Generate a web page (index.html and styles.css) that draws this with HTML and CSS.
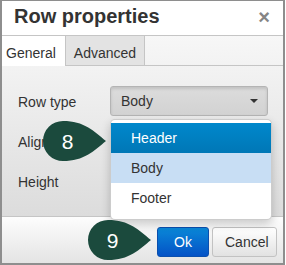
FILE: index.html
```html
<!DOCTYPE html>
<html>
<head>
<meta charset="utf-8">
<link rel="stylesheet" href="styles.css">
</head>
<body>
<div class="dialog">
  <div class="head">
    <span class="title">Row properties</span>
    <span class="close">×</span>
  </div>
  <div class="panel">
    <div class="tabs">
      <div class="tab active">General</div>
      <div class="tab">Advanced</div>
    </div>
    <div class="form">
      <div class="row">
        <span class="label">Row type</span>
        <div class="listbox pressed"><span>Body</span><i class="caret"></i></div>
      </div>
      <div class="row">
        <span class="label">Align</span>
        <div class="listbox"><i class="caret"></i></div>
      </div>
      <div class="row">
        <span class="label">Height</span>
        <div class="textbox"></div>
      </div>
    </div>
  </div>
  <div class="foot">
    <button class="btn primary">Ok</button>
    <button class="btn">Cancel</button>
  </div>

  <div class="menu">
    <div class="item selected">Header</div>
    <div class="item hover">Body</div>
    <div class="item">Footer</div>
  </div>

  <div class="marker m8">
    <svg width="66" height="42" viewBox="0 0 66 42"><path d="M64 21 C52 11 42 1 21 1 A20 20 0 0 0 21 41 C42 41 52 31 64 21 Z"/></svg>
    <span class="num">8</span>
  </div>
  <div class="marker m9">
    <svg width="66" height="42" viewBox="0 0 66 42"><path d="M64 21 C52 11 42 1 21 1 A20 20 0 0 0 21 41 C42 41 52 31 64 21 Z"/></svg>
    <span class="num">9</span>
  </div>
</div>
</body>
</html>
```

FILE: styles.css
```css
html, body {
  margin: 0;
  padding: 0;
  background: #fff;
}

body {
  font-family: "Liberation Sans", Arial, sans-serif;
  font-size: 14px;
  color: #333;
}

.dialog {
  position: relative;
  box-sizing: border-box;
  width: 285px;
  height: 265px;
  border: 2px solid #8e8e8e;
  border-top-width: 1px;
  background: #fff;
  overflow: hidden;
}

.head {
  position: relative;
  padding: 5px 12px 9px;
  border-bottom: 1px solid #c5c5c5;
  background: #fff;
}

.title {
  display: block;
  font-size: 20px;
  line-height: 20px;
  font-weight: bold;
  color: #333;
}

.close {
  position: absolute;
  right: 13px;
  top: 5px;
  font-size: 20px;
  line-height: 22px;
  font-weight: bold;
  color: #858585;
}

.panel {
  background: linear-gradient(#f7f7f7, #dcdcdc);
}

.tabs {
  display: flex;
  height: 29px;
  border-bottom: 1px solid #c5c5c5;
}

.tab {
  padding: 7px 8px 2px 8px;
  line-height: 20px;
  background: #e3e3e3;
  border-right: 1px solid #c5c5c5;
  color: #333;
}

.tab.active {
  padding-left: 4px;
  padding-right: 9px;
  background: #fff;
  margin-bottom: -1px;
}

.form {
  display: flex;
  flex-direction: column;
  gap: 10px;
  padding: 20px 15px 20px 16px;
}

.row {
  display: grid;
  grid-template-columns: 92px 158px;
  height: 30px;
}

.label {
  line-height: 30px;
  padding-top: 1px;
}

.listbox {
  position: relative;
  box-sizing: border-box;
  height: 30px;
  padding-left: 10px;
  line-height: 28px;
  border: 1px solid #b4b4b4;
  border-radius: 3px;
  background: linear-gradient(#f6f6f6, #dadada);
}

.listbox.pressed {
  background: linear-gradient(#dcdcdc, #d2d2d2);
  box-shadow: inset 0 2px 3px rgba(0, 0, 0, 0.12);
}

.caret {
  position: absolute;
  right: 9px;
  top: 12px;
  width: 0;
  height: 0;
  border-top: 4px solid #333;
  border-left: 4px solid transparent;
  border-right: 4px solid transparent;
}

.textbox {
  box-sizing: border-box;
  height: 30px;
  border: 1px solid #c5c5c5;
  border-radius: 3px;
  background: #fff;
}

.foot {
  display: flex;
  justify-content: flex-end;
  gap: 3px;
  padding: 10px 6px 6px;
  border-top: 1px solid #c5c5c5;
  background: linear-gradient(#fdfdfd, #e4e4e4);
}

.btn {
  box-sizing: border-box;
  height: 30px;
  padding: 0 12px;
  font-family: "Liberation Sans", Arial, sans-serif;
  font-size: 14px;
  line-height: 28px;
  color: #333;
  border: 1px solid #c2c2c2;
  border-radius: 3px;
  background: linear-gradient(#ffffff, #e2e2e2);
}

.btn.primary {
  width: 52px;
  color: #fff;
  border-color: #0b4fae;
  background: linear-gradient(#0a88d8, #0452c6);
}

.btn:not(.primary) {
  width: 65px;
}

.menu {
  position: absolute;
  left: 108px;
  top: 118px;
  box-sizing: border-box;
  width: 162px;
  height: 101px;
  padding: 3px 0 6px;
  background: #fff;
  border: 1px solid rgba(0, 0, 0, 0.2);
  border-radius: 5px;
  box-shadow: 0 4px 10px rgba(0, 0, 0, 0.2);
}

.item {
  height: 30px;
  line-height: 30px;
  padding-left: 20px;
  color: #333;
}

.item.selected {
  color: #fff;
  background: linear-gradient(#0088cc, #0077b6);
}

.item.hover {
  background: #c8def4;
}

.marker {
  position: absolute;
  width: 66px;
  height: 42px;
}

.marker svg {
  display: block;
  fill: #1b4a3d;
}

.m8 {
  left: 40px;
  top: 119px;
}

.m9 {
  left: 85px;
  top: 218px;
}

.num {
  position: absolute;
  left: 15px;
  top: 0;
  width: 21px;
  height: 42px;
  line-height: 43px;
  text-align: center;
  font-size: 21px;
  color: #fff;
}
```
